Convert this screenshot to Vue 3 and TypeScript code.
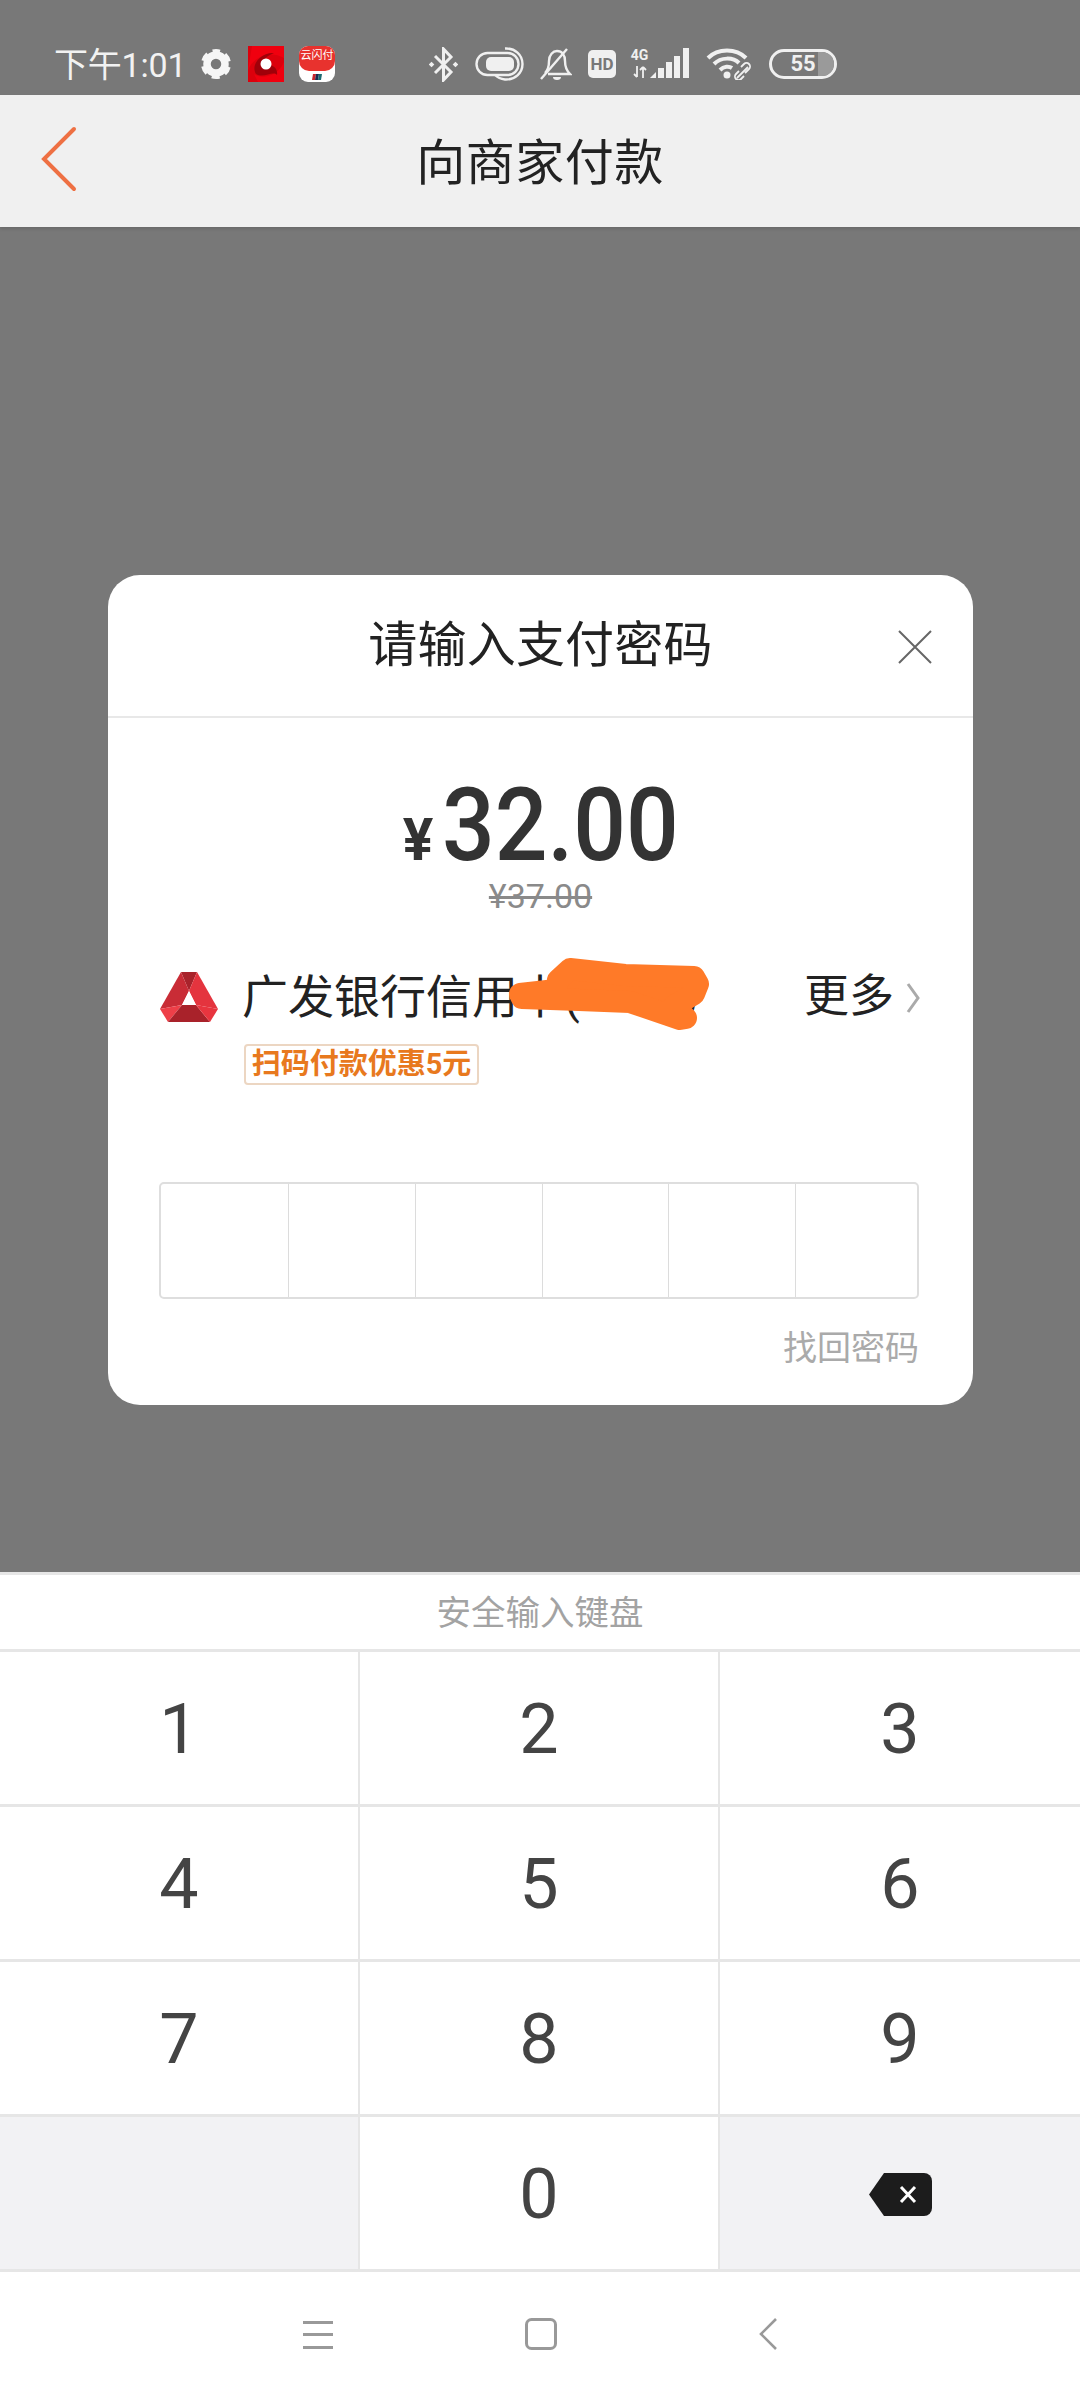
<script setup lang="ts">
const keys: string[] = ['1', '2', '3', '4', '5', '6', '7', '8', '9'];
const cells: number[] = [1, 2, 3, 4, 5, 6];
</script>

<template>
  <div class="page">
    <div class="status">
      <span class="time">下午1:01</span>
      <svg class="gear" width="30" height="30" viewBox="0 0 30 30">
        <circle cx="15" cy="15" r="9" fill="none" stroke="#f6f6f6" stroke-width="7.5" />
        <circle cx="15" cy="15" r="12.5" fill="none" stroke="#f6f6f6" stroke-width="5" stroke-dasharray="7.6 5.5" stroke-dashoffset="3.8" transform="rotate(-90 15 15)" />
      </svg>
      <svg class="redsq" width="36" height="36" viewBox="0 0 36 36">
        <rect width="36" height="36" fill="#dc000c" />
        <path d="M0 24C6 10 22 4 36 12V0H4ZM36 16C30 30 14 34 6 28L10 36H36Z" fill="#f0000f" />
        <path d="M8 28C2 18 14 6 26 7C18 10 11 17 18 18C26 19 30 23 29 29C25 24 16 33 8 28Z" fill="#a00009" />
        <circle cx="18" cy="18" r="5.5" fill="#fff" />
      </svg>
      <div class="unionpay">
        <span class="up-top">云闪付</span>
        <svg class="up-flag" width="10" height="6" viewBox="0 0 10 6">
          <path d="M1 0H4L3 6H0Z" fill="#c8242c" /><path d="M4 0H7L6 6H3Z" fill="#1b2a50" /><path d="M7 0H10L9 6H6Z" fill="#1b6a70" />
        </svg>
      </div>
      <svg class="bt" width="29" height="35" viewBox="0 0 29 35" fill="none" stroke="#f0f0f0" stroke-width="3">
        <path d="M6 9L22 25L14.5 33V2L22 10L6 26" />
        <rect x="0.5" y="15.5" width="4" height="4" fill="#f0f0f0" stroke="none" transform="rotate(45 2.5 17.5)" />
        <rect x="24.5" y="15.5" width="4" height="4" fill="#f0f0f0" stroke="none" transform="rotate(45 26.5 17.5)" />
      </svg>
      <svg class="pill" width="49" height="34" viewBox="0 0 49 34" fill="none" stroke="#f0f0f0" stroke-width="2.4">
        <rect x="1.5" y="6" width="42" height="22" rx="11" />
        <rect x="11" y="10" width="28" height="14" rx="5" fill="#f0f0f0" stroke="none" />
        <path d="M30 1.5C40 1 47.5 8 47.5 17C47.5 26 40 33 30 32.5C26 32 23 31 20 28" />
      </svg>
      <svg class="bell" width="32" height="32" viewBox="0 0 32 32" fill="none" stroke="#f0f0f0" stroke-width="2.4">
        <path d="M5 25C8 22 9 19 9 13C9 7 13 3 17 3C22 3 25 7 25 13C25 19 27 23 30 26H8" />
        <path d="M1 31L27 1" />
        <path d="M13 29H21A4 3 0 0 1 13 29Z" fill="#f0f0f0" stroke="none" />
      </svg>
      <span class="hd">HD</span>
      <div class="net">
        <div class="net-text">
          <span class="g4">4G</span>
          <svg width="14" height="12" viewBox="0 0 14 12" fill="none" stroke="#f0f0f0" stroke-width="1.8">
            <path d="M4 0V11M1 8L4 11M10 12V1M7 4L10 1M13 4L10 1" />
          </svg>
        </div>
        <svg width="40" height="30" viewBox="0 0 40 30" fill="#f0f0f0">
          <path d="M0 30L6 24V30Z" /><rect x="8" y="20" width="6" height="10" /><rect x="16" y="14" width="6" height="16" /><rect x="24" y="8" width="6" height="22" /><rect x="33" y="0" width="6" height="30" />
        </svg>
      </div>
      <svg class="wifi" width="46" height="33" viewBox="0 0 46 33" fill="none" stroke="#f0f0f0" stroke-width="4">
        <path d="M2 11C12 1 30 1 40 11" />
        <path d="M8 17C15 10 27 10 33 16" />
        <path d="M14 23C18 19 23 19 26 21" />
        <circle cx="21" cy="28" r="3.5" fill="#f0f0f0" stroke="none" />
        <path d="M31 31L42 20M33 24L30 27A3 3 0 0 0 35 32L38 29M39 26L43 22A3 3 0 0 0 38 17L35 20" stroke-width="1.8" />
      </svg>
      <div class="battery">
        <div class="batt-fill"></div>
        <span class="batt-num">55</span>
      </div>
    </div>

    <header class="header">
      <svg class="back" width="36" height="66" viewBox="0 0 36 66" fill="none" stroke="#ee7043" stroke-width="4" stroke-linecap="round">
        <path d="M33 3L3 33L33 63" />
      </svg>
      <h1 class="header-title">向商家付款</h1>
    </header>

    <main class="overlay">
      <section class="modal">
        <div class="modal-head">
          <span></span>
          <h2 class="modal-title">请输入支付密码</h2>
          <svg class="close" width="34" height="34" viewBox="0 0 34 34" stroke="#666" stroke-width="2" fill="none">
            <path d="M1 1L33 33M33 1L1 33" />
          </svg>
        </div>

        <div class="price">
          <span class="yen">¥</span><span class="amount">32.00</span>
        </div>
        <div class="orig">¥37.00</div>

        <div class="bank">
          <svg class="logo" width="58" height="50" viewBox="0 0 58 50">
            <path d="M21 0H37L29 19Z" fill="#a8232b" />
            <path d="M21 0L29 19L22 33L0 37Z" fill="#c92c36" />
            <path d="M37 0L58 37L36 33L29 19Z" fill="#e4343e" />
            <path d="M0 37L22 33L8 50Z" fill="#ee3f48" />
            <path d="M22 33H36L50 50H8Z" fill="#a9222a" />
            <path d="M36 33L58 37L50 50Z" fill="#e8353f" />
            <path d="M29 19L36 33H22Z" fill="#fff" />
          </svg>
          <div class="bank-name">
            <span>广发银行信用卡(&nbsp;&nbsp;&nbsp;&nbsp;&nbsp;&nbsp;&nbsp;&nbsp;&nbsp;)</span>
            <svg class="scribble" width="207" height="78" viewBox="-3 -3 207 78">
              <path d="M12 36L48 32L50 22L62 11L117 17L186 19L190 26L186 36L166 48L178 60L172 61L122 44L71 42L14 40Z" fill="#ff7a28" stroke="#ff7a28" stroke-width="22" stroke-linejoin="round" />
            </svg>
          </div>
          <span class="more">更多</span>
          <svg class="more-arrow" width="14" height="30" viewBox="0 0 14 30" fill="none" stroke="#aaa" stroke-width="3">
            <path d="M2 1L12 15L2 29" />
          </svg>
        </div>

        <span class="tag">扫码付款优惠5元</span>

        <div class="pwd">
          <div v-for="c in cells" :key="c" class="pwd-cell"></div>
        </div>

        <div class="forgot">找回密码</div>
      </section>
    </main>

    <section class="keyboard">
      <div class="kb-title">安全输入键盘</div>
      <div class="keys">
        <div v-for="k in keys" :key="k" class="key">{{ k }}</div>
        <div class="key key-muted"></div>
        <div class="key">0</div>
        <div class="key key-muted">
          <svg width="63" height="43" viewBox="0 0 63 43">
            <path d="M0 21.5L15 0H55A8 8 0 0 1 63 8V35A8 8 0 0 1 55 43H15Z" fill="#1c1c1c" />
            <path d="M32 14L46 29M46 14L32 29" stroke="#fff" stroke-width="3" />
          </svg>
        </div>
      </div>
    </section>

    <nav class="navbar">
      <svg width="30" height="28" viewBox="0 0 30 28" fill="#999">
        <rect y="0" width="30" height="3" /><rect y="12" width="30" height="3" /><rect y="25" width="30" height="3" />
      </svg>
      <svg width="32" height="32" viewBox="0 0 32 32" fill="none" stroke="#999" stroke-width="3">
        <rect x="1.5" y="1.5" width="29" height="29" rx="5" />
      </svg>
      <svg width="18" height="32" viewBox="0 0 18 32" fill="none" stroke="#999" stroke-width="2.6">
        <path d="M17 1L2 16L17 31" />
      </svg>
    </nav>
  </div>
</template>

<style>
html, body { margin: 0; padding: 0; }
</style>

<style scoped>
.page {
  width: 1080px;
  height: 2400px;
  background: #787878;
  display: flex;
  flex-direction: column;
  overflow: hidden;
  font-family: Roboto, "Noto Sans CJK SC", sans-serif;
}
.status {
  height: 95px;
  box-sizing: border-box;
  padding: 46px 0 0 54px;
  display: flex;
  align-items: flex-start;
  flex: none;
}
.time { color: #f2f2f2; font-size: 34px; line-height: 38px; width: 128px; white-space: nowrap; letter-spacing: -0.2px; }
.gear { margin: 3px 0 0 19px; }
.redsq { margin-left: 17px; }
.unionpay {
  margin-left: 15px;
  width: 36px;
  height: 36px;
  border-radius: 9px;
  background: #fff;
  overflow: hidden;
  display: flex;
  flex-direction: column;
  align-items: center;
}
.up-top {
  width: 100%;
  height: 25px;
  background: #e8322e;
  color: #fff;
  font-size: 11px;
  line-height: 20px;
  text-align: center;
  border-radius: 0 0 10px 10px;
  white-space: nowrap;
}
.up-flag { margin-top: 3px; }
.bt { margin: 1px 0 0 94px; }
.pill { margin: 1px 0 0 17px; }
.bell { margin: 2px 0 0 16px; }
.hd {
  margin: 4px 0 0 16px;
  width: 28px;
  height: 28px;
  border-radius: 5px;
  background: #f0f0f0;
  color: #787878;
  font-size: 17px;
  font-weight: 700;
  line-height: 28px;
  text-align: center;
}
.net { margin: 1px 0 0 16px; display: flex; align-items: flex-end; gap: 3px; height: 31px; }
.net-text { display: flex; flex-direction: column; align-items: center; width: 15px; height: 31px; justify-content: flex-end; }
.g4 { color: #f0f0f0; font-size: 14px; font-weight: 700; line-height: 14px; margin-bottom: 4px; white-space: nowrap; }
.wifi { margin: 1px 0 0 16px; }
.battery {
  margin: 3px 0 0 17px;
  width: 68px;
  height: 30px;
  box-sizing: border-box;
  border: 3px solid #f0f0f0;
  border-radius: 15px;
  display: flex;
  align-items: center;
  justify-content: center;
  position: relative;
  overflow: hidden;
}
.batt-fill { position: absolute; right: 0; top: 0; bottom: 0; width: 16px; background: #9a9a9a; }
.batt-num { position: relative; color: #f0f0f0; font-size: 22px; font-weight: 700; line-height: 24px; }

.header {
  height: 132px;
  background: #f0f0f0;
  display: grid;
  grid-template-columns: 1fr auto 1fr;
  align-items: center;
  flex: none;
  box-shadow: 0 2px 3px rgba(0, 0, 0, 0.12);
}
.back { margin-left: 41px; margin-top: -4px; }
.header-title {
  grid-column: 2;
  margin: 6px 0 0;
  font-size: 49px;
  font-weight: 400;
  color: #222;
  line-height: 60px;
  letter-spacing: 0.5px;
}
.overlay { height: 1345px; box-sizing: border-box; padding: 348px 0 0 108px; flex: none; }
.modal {
  width: 865px;
  height: 830px;
  background: #fff;
  border-radius: 32px;
  box-sizing: border-box;
  display: flex;
  flex-direction: column;
}
.modal-head {
  height: 143px;
  box-sizing: border-box;
  border-bottom: 2px solid #e8e8e8;
  display: grid;
  grid-template-columns: 1fr auto 1fr;
  padding-top: 41px;
  align-items: start;
  flex: none;
}
.modal-title {
  margin: 0;
  font-size: 49px;
  font-weight: 400;
  line-height: 60px;
  color: #222;
  letter-spacing: 0.2px;
}
.close { justify-self: end; margin: 14px 41px 0 0; }
.price {
  margin-top: 55px;
  height: 103px;
  display: flex;
  justify-content: center;
  align-items: baseline;
  color: #333;
  font-weight: 500;
}
.yen { font-size: 60px; line-height: 104px; font-weight: 700; display: inline-block; transform: scaleX(0.95); margin-left: -5px; }
.amount { font-size: 102px; line-height: 104px; display: inline-block; width: 240px; transform: scaleX(0.91); transform-origin: left center; white-space: nowrap; margin-left: 8px; margin-right: -8px; }
.orig {
  height: 40px;
  line-height: 40px;
  text-align: center;
  font-size: 34px;
  color: #8a8a8a;
  text-decoration: line-through;
}
.bank {
  margin: 51px 0 0 52px;
  height: 60px;
  display: flex;
  align-items: center;
  width: 770px;
  flex: none;
}
.bank-name {
  position: relative;
  margin-left: 24px;
  width: 562px;
  font-size: 46px;
  line-height: 60px;
  color: #222;
  white-space: nowrap;
}
.scribble { position: absolute; left: 263px; top: -12px; }
.more { font-size: 45px; color: #222; line-height: 60px; white-space: nowrap; }
.more-arrow { margin-left: 12px; margin-top: 2px; }
.tag {
  margin: 17px 0 0 136px;
  align-self: flex-start;
  height: 41px;
  width: 235px;
  box-sizing: border-box;
  border: 2px solid #ecd6c2;
  border-radius: 4px;
  color: #e8791e;
  font-size: 29px;
  font-weight: 700;
  line-height: 37px;
  text-align: center;
  white-space: nowrap;
}
.pwd {
  margin: 97px 0 0 51px;
  width: 760px;
  height: 117px;
  box-sizing: border-box;
  border: 2px solid #dedede;
  border-radius: 5px;
  display: grid;
  grid-template-columns: 127px 127px 127px 126px 127px 122px;
  flex: none;
}
.pwd-cell { border-left: 1px solid #dcdcdc; }
.pwd-cell:first-child { border-left: none; }
.forgot {
  margin: 29px 54px 0 0;
  text-align: right;
  font-size: 34px;
  line-height: 40px;
  color: #aaaaaa;
}
.keyboard {
  background: #fff;
  flex: none;
  border-top: 3px solid #e6e6e6;
}
.kb-title {
  height: 74px;
  line-height: 76px;
  text-align: center;
  font-size: 34.5px;
  color: #a3a3a3;
}
.keys {
  display: grid;
  grid-template-columns: 358px 358px 360px;
  column-gap: 2px;
  row-gap: 3px;
  grid-auto-rows: 152px;
  background: #e6e6e6;
  border-top: 3px solid #e6e6e6;
  border-bottom: 3px solid #e6e6e6;
}
.key {
  background: #fff;
  color: #444;
  font-size: 70px;
  display: flex;
  align-items: center;
  justify-content: center;
  line-height: 1;
  padding-top: 2px;
  box-sizing: border-box;
}
.key-muted { background: #f2f2f4; }
.navbar {
  flex: 1;
  background: #fff;
  display: flex;
  align-items: flex-start;
  padding: 49px 0 0 303px;
  gap: 192px;
}
.navbar svg:nth-child(2) { margin-top: -3px; }
.navbar svg:nth-child(3) { margin-top: -3px; margin-left: 10px; }
</style>
